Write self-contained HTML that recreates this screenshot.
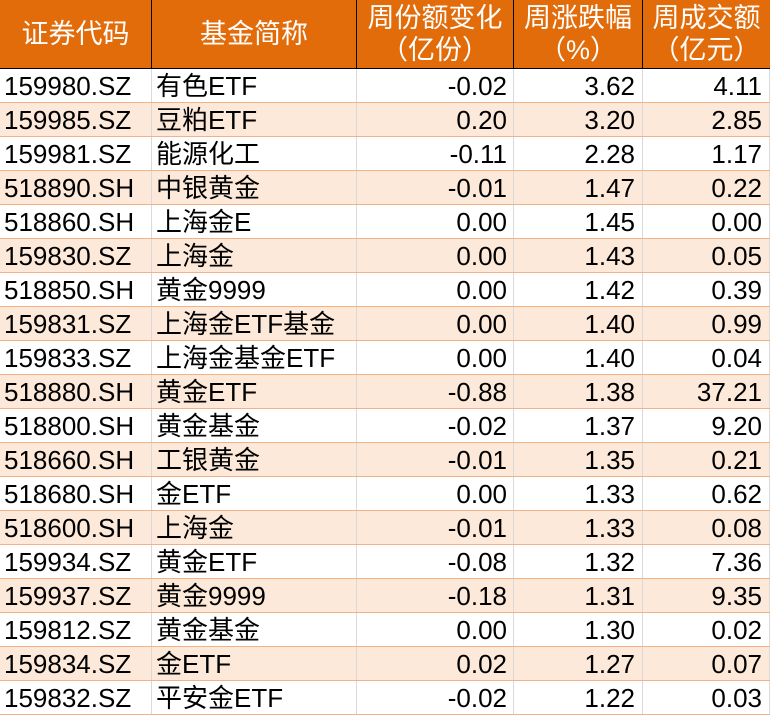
<!DOCTYPE html><html><head><meta charset="utf-8"><style>
body{margin:0;width:770px;height:715px;overflow:hidden;background:#fff;font-family:"Liberation Sans","Noto Sans CJK SC",sans-serif}
.h{position:absolute;top:0;left:0;width:770px;height:69px;background:#E26B0A;border-bottom:1px solid #000;box-sizing:border-box}
.h div{position:absolute;top:0;height:68px;color:#fff;font-size:27px;line-height:32px;text-align:center;border-right:1px solid #000;box-sizing:border-box;display:flex;align-items:center;justify-content:center;white-space:nowrap}
.r{position:absolute;left:0;width:770px;height:34px;border-bottom:1px solid #F4B183;box-sizing:border-box}
.r.p{background:#FDE9D9}
.r div{position:absolute;top:0;height:33px;line-height:34px;font-size:26px;color:#000;white-space:nowrap;border-right:1px solid #d9d9d9;box-sizing:border-box;overflow:hidden}
.a{left:0;width:152px;padding-left:4px}
.b{left:152px;width:205px;padding-left:4px}
.c{left:357px;width:157px;text-align:right;padding-right:6px}
.d{left:514px;width:129px;text-align:right;padding-right:7px}
.e{left:643px;width:127px;text-align:right;padding-right:7px}
</style></head><body>
<div class="h"><div style="left:0;width:152px">证券代码</div><div style="left:152px;width:205px">基金简称</div><div style="left:357px;width:157px">周份额变化<br>（亿份）</div><div style="left:514px;width:129px">周涨跌幅<br>（%）</div><div style="left:643px;width:127px;border-right:0">周成交额<br>（亿元）</div></div>
<div class="r" style="top:69px"><div class=a>159980.SZ</div><div class=b>有色ETF</div><div class=c>-0.02</div><div class=d>3.62</div><div class=e>4.11</div></div>
<div class="r p" style="top:103px"><div class=a>159985.SZ</div><div class=b>豆粕ETF</div><div class=c>0.20</div><div class=d>3.20</div><div class=e>2.85</div></div>
<div class="r" style="top:137px"><div class=a>159981.SZ</div><div class=b>能源化工</div><div class=c>-0.11</div><div class=d>2.28</div><div class=e>1.17</div></div>
<div class="r p" style="top:171px"><div class=a>518890.SH</div><div class=b>中银黄金</div><div class=c>-0.01</div><div class=d>1.47</div><div class=e>0.22</div></div>
<div class="r" style="top:205px"><div class=a>518860.SH</div><div class=b>上海金E</div><div class=c>0.00</div><div class=d>1.45</div><div class=e>0.00</div></div>
<div class="r p" style="top:239px"><div class=a>159830.SZ</div><div class=b>上海金</div><div class=c>0.00</div><div class=d>1.43</div><div class=e>0.05</div></div>
<div class="r" style="top:273px"><div class=a>518850.SH</div><div class=b>黄金9999</div><div class=c>0.00</div><div class=d>1.42</div><div class=e>0.39</div></div>
<div class="r p" style="top:307px"><div class=a>159831.SZ</div><div class=b>上海金ETF基金</div><div class=c>0.00</div><div class=d>1.40</div><div class=e>0.99</div></div>
<div class="r" style="top:341px"><div class=a>159833.SZ</div><div class=b>上海金基金ETF</div><div class=c>0.00</div><div class=d>1.40</div><div class=e>0.04</div></div>
<div class="r p" style="top:375px"><div class=a>518880.SH</div><div class=b>黄金ETF</div><div class=c>-0.88</div><div class=d>1.38</div><div class=e>37.21</div></div>
<div class="r" style="top:409px"><div class=a>518800.SH</div><div class=b>黄金基金</div><div class=c>-0.02</div><div class=d>1.37</div><div class=e>9.20</div></div>
<div class="r p" style="top:443px"><div class=a>518660.SH</div><div class=b>工银黄金</div><div class=c>-0.01</div><div class=d>1.35</div><div class=e>0.21</div></div>
<div class="r" style="top:477px"><div class=a>518680.SH</div><div class=b>金ETF</div><div class=c>0.00</div><div class=d>1.33</div><div class=e>0.62</div></div>
<div class="r p" style="top:511px"><div class=a>518600.SH</div><div class=b>上海金</div><div class=c>-0.01</div><div class=d>1.33</div><div class=e>0.08</div></div>
<div class="r" style="top:545px"><div class=a>159934.SZ</div><div class=b>黄金ETF</div><div class=c>-0.08</div><div class=d>1.32</div><div class=e>7.36</div></div>
<div class="r p" style="top:579px"><div class=a>159937.SZ</div><div class=b>黄金9999</div><div class=c>-0.18</div><div class=d>1.31</div><div class=e>9.35</div></div>
<div class="r" style="top:613px"><div class=a>159812.SZ</div><div class=b>黄金基金</div><div class=c>0.00</div><div class=d>1.30</div><div class=e>0.02</div></div>
<div class="r p" style="top:647px"><div class=a>159834.SZ</div><div class=b>金ETF</div><div class=c>0.02</div><div class=d>1.27</div><div class=e>0.07</div></div>
<div class="r" style="top:681px"><div class=a>159832.SZ</div><div class=b>平安金ETF</div><div class=c>-0.02</div><div class=d>1.22</div><div class=e>0.03</div></div>
</body></html>
